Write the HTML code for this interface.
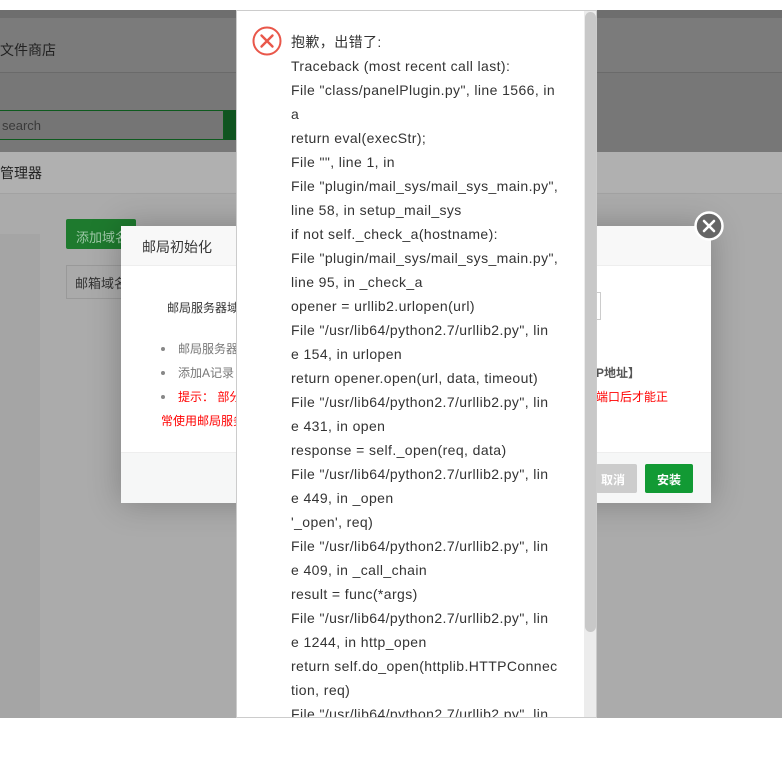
<!DOCTYPE html>
<html><head><meta charset="utf-8"><style>
*{margin:0;padding:0;box-sizing:border-box}
body{width:782px;height:758px;background:#fff;position:relative;overflow:hidden;font-family:"Liberation Sans","Noto Sans CJK SC",sans-serif}
.a{position:absolute}
.t{font-size:13px;color:#333;white-space:nowrap}
.err{white-space:nowrap;letter-spacing:0.4px}
</style></head><body>
<div class="a" style="left:0;top:10px;width:782px;height:142px;background:#777"></div>
<div class="a" style="left:0;top:10px;width:782px;height:8px;background:#6e6e6e"></div>
<div class="a" style="left:0;top:18px;width:782px;height:55px;background:#7b7b7b;border-bottom:1px solid #6a6a6a"></div>
<div class="a t" style="left:0;top:40px;font-size:14px;color:#222">文件商店</div>
<div class="a" style="left:0;top:110px;width:224px;height:30px;border:1px solid #0e5a1e;border-left:none;background:#757575"></div>
<div class="a" style="left:224px;top:110px;width:14px;height:30px;background:#0f5420"></div>
<div class="a t" style="left:2px;top:118px;color:#3a3a3a;font-size:13px">search</div>
<div class="a" style="left:0;top:152px;width:782px;height:566px;background:#ababab"></div>
<div class="a" style="left:0;top:152px;width:782px;height:42px;background:#b0b0b0;border-bottom:1px solid #a2a2a2"></div>
<div class="a t" style="left:0;top:163px;font-size:14px;color:#222">管理器</div>
<div class="a" style="left:0;top:234px;width:40px;height:484px;background:#a5a5a5"></div>
<div class="a" style="left:66px;top:219px;width:70px;height:30px;background:#1e7a2e;border-radius:2px"></div>
<div class="a t" style="left:76px;top:227px;color:#9fc9a8">添加域名</div>
<div class="a" style="left:66px;top:265px;width:60px;height:34px;border:1px solid #999;background:#aaa"></div>
<div class="a t" style="left:75px;top:273px;color:#333">邮箱域名</div>
<div class="a" style="left:121px;top:226px;width:590px;height:277px;background:#fff;box-shadow:0 0 30px rgba(0,0,0,.25)"></div>
<div class="a" style="left:121px;top:226px;width:590px;height:40px;background:#f8f8f8;border-bottom:1px solid #eee"></div>
<div class="a t" style="left:142px;top:237px;font-size:14px">邮局初始化</div>
<div class="a t" style="left:167px;top:299px;font-size:12px">邮局服务器域</div>
<div class="a" style="left:590px;top:292px;width:11px;height:28px;border:1px solid #ccc;border-left:none"></div>
<div class="a" style="left:161px;top:347px;width:4px;height:4px;border-radius:50%;background:#888"></div>
<div class="a" style="left:161px;top:371px;width:4px;height:4px;border-radius:50%;background:#888"></div>
<div class="a" style="left:161px;top:395px;width:4px;height:4px;border-radius:50%;background:#888"></div>
<div class="a t" style="left:178px;top:340px;font-size:12px;color:#777">邮局服务器</div>
<div class="a t" style="left:178px;top:364px;font-size:12px;color:#777">添加A记录</div>
<div class="a t" style="left:178px;top:388px;font-size:12px;color:#f00">提示： 部分</div>
<div class="a t" style="left:161px;top:412px;font-size:12px;color:#f00">常使用邮局服务</div>
<div class="a t" style="left:596px;top:364px;font-size:12px;color:#555;font-weight:bold">P地址】</div>
<div class="a t" style="left:596px;top:388px;font-size:12px;color:#f00">端口后才能正</div>
<div class="a" style="left:121px;top:452px;width:590px;height:51px;background:#f6f7f7;border-top:1px solid #eee"></div>
<div class="a" style="left:596px;top:464px;width:41px;height:29px;background:#ccc;border-radius:2px"></div>
<div class="a t" style="left:601px;top:471px;font-size:12px;color:#fff;font-weight:bold">取消</div>
<div class="a" style="left:645px;top:464px;width:48px;height:29px;background:#129a34;border-radius:2px"></div>
<div class="a t" style="left:657px;top:471px;font-size:12px;color:#fff;font-weight:bold">安装</div>
<svg class="a" style="left:694px;top:211px" width="30" height="30" viewBox="0 0 30 30"><circle cx="15" cy="15" r="13.5" fill="#666" stroke="#fff" stroke-width="2.5"/><path d="M10 10L20 20M20 10L10 20" stroke="#fff" stroke-width="2.6" stroke-linecap="round"/></svg>
<div class="a" style="left:236px;top:10px;width:361px;height:708px;background:#fff;border:1px solid #ccc;overflow:hidden">
<svg class="a" style="left:14px;top:14px" width="32" height="32" viewBox="0 0 32 32"><circle cx="16" cy="16" r="13.5" fill="none" stroke="#e9574a" stroke-width="2"/><path d="M10.5 10.5L21.5 21.5M21.5 10.5L10.5 21.5" stroke="#e9574a" stroke-width="2.4" stroke-linecap="round"/></svg>
<div class="a err" style="left:54px;top:19px;font-size:14px;line-height:24px;color:#333">抱歉，出错了:<br>Traceback (most recent call last):<br>File "class/panelPlugin.py", line 1566, in<br>a<br>return eval(execStr);<br>File "", line 1, in<br>File "plugin/mail_sys/mail_sys_main.py",<br>line 58, in setup_mail_sys<br>if not self._check_a(hostname):<br>File "plugin/mail_sys/mail_sys_main.py",<br>line 95, in _check_a<br>opener = urllib2.urlopen(url)<br>File "/usr/lib64/python2.7/urllib2.py", lin<br>e 154, in urlopen<br>return opener.open(url, data, timeout)<br>File "/usr/lib64/python2.7/urllib2.py", lin<br>e 431, in open<br>response = self._open(req, data)<br>File "/usr/lib64/python2.7/urllib2.py", lin<br>e 449, in _open<br>'_open', req)<br>File "/usr/lib64/python2.7/urllib2.py", lin<br>e 409, in _call_chain<br>result = func(*args)<br>File "/usr/lib64/python2.7/urllib2.py", lin<br>e 1244, in http_open<br>return self.do_open(httplib.HTTPConnec<br>tion, req)<br>File "/usr/lib64/python2.7/urllib2.py", lin</div>
<div class="a" style="left:347px;top:0;width:13px;height:708px;background:#ececec"></div>
<div class="a" style="left:348px;top:1px;width:11px;height:620px;background:#c8c8c8;border-radius:6px"></div>
</div>
</body></html>
